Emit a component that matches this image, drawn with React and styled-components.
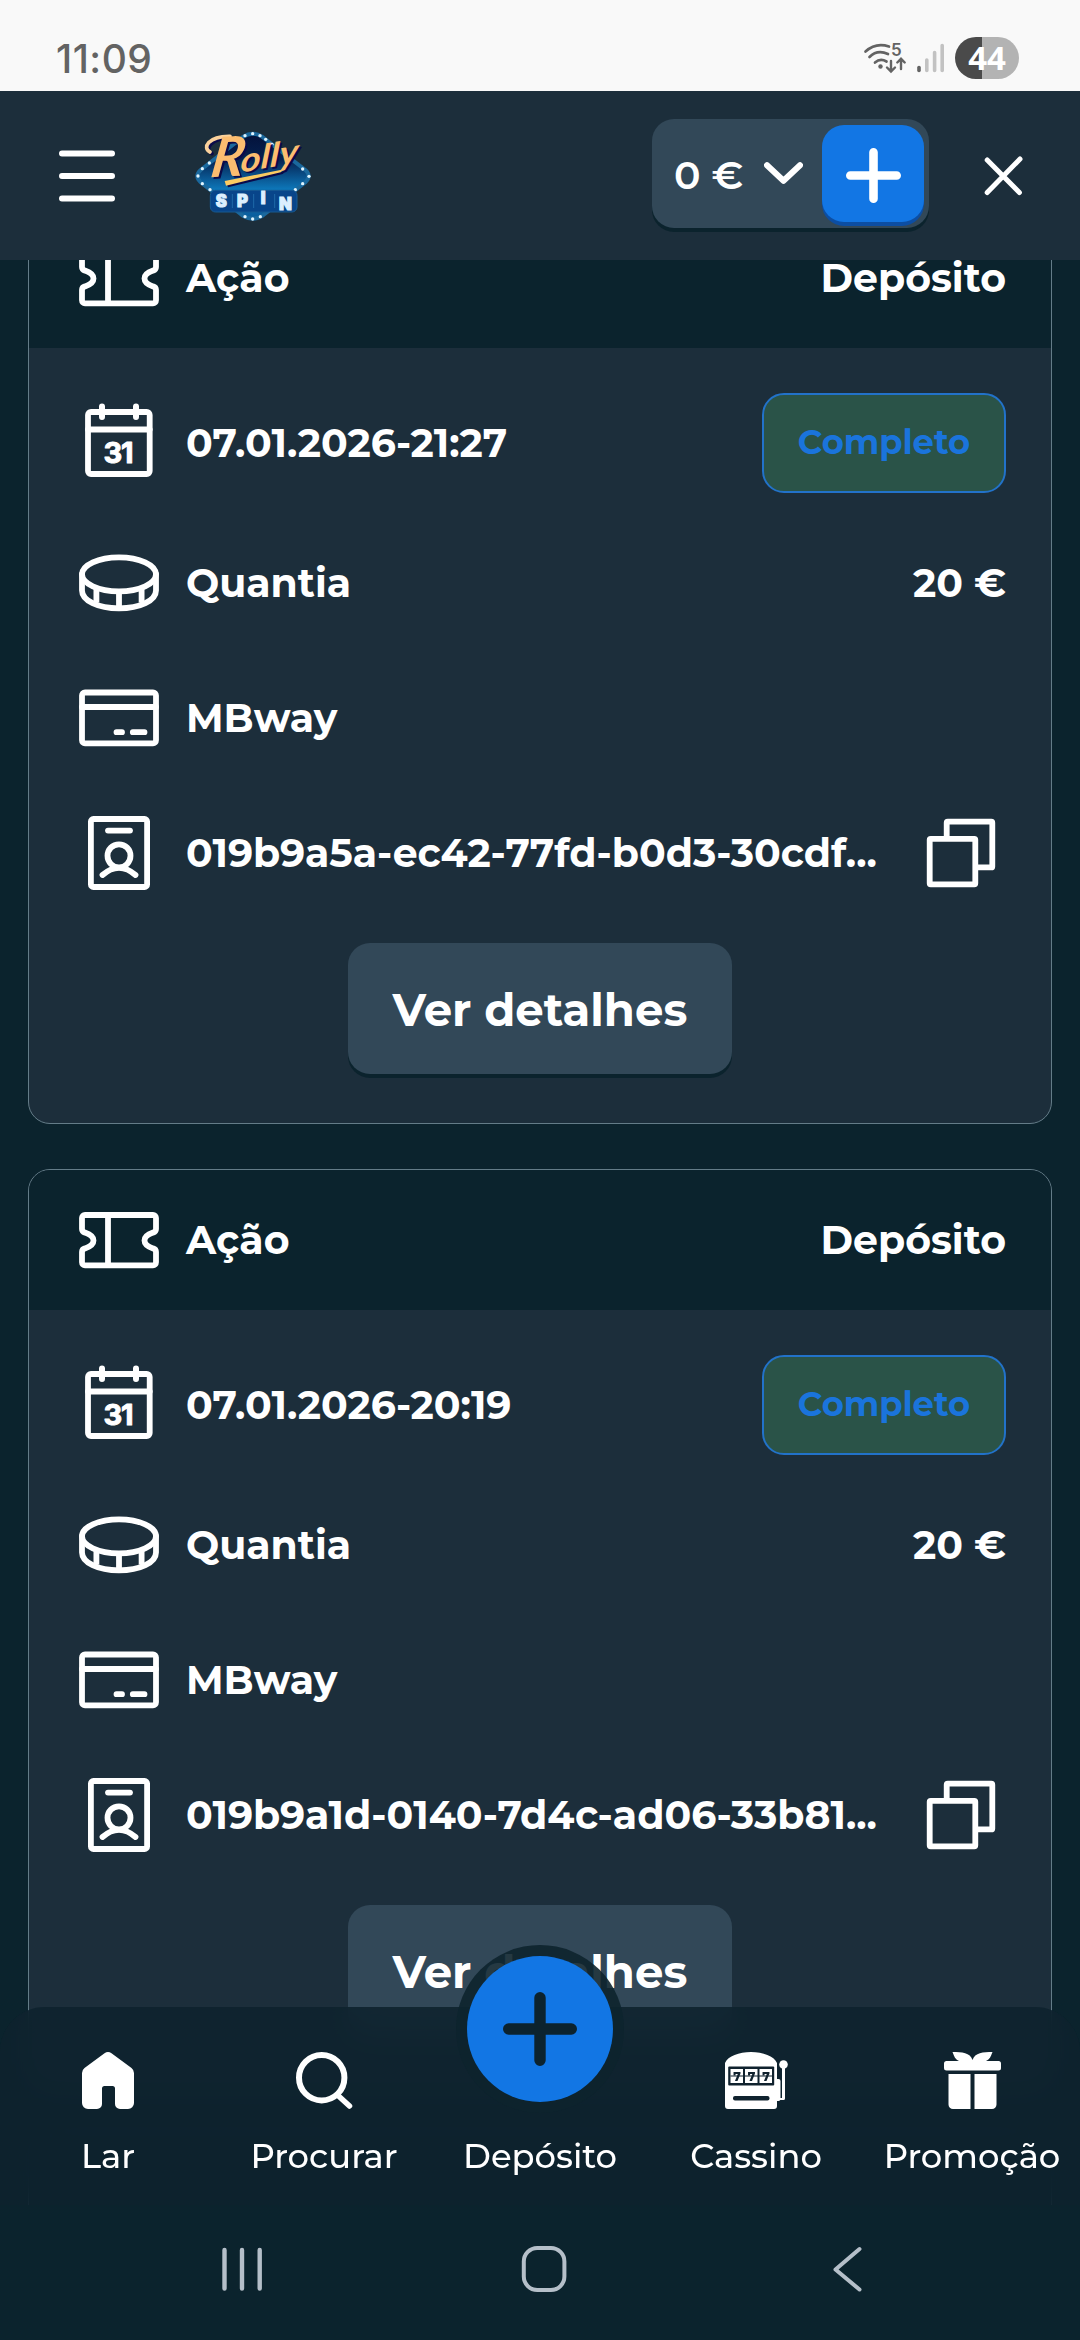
import styled, { createGlobalStyle, css } from "styled-components";

const GlobalStyle = createGlobalStyle`
    * {
        box-sizing: border-box;
    }

    body {
        margin: 0;
        background: #0b232d;
        color: #fff;
        font-family: Montserrat, Inter, sans-serif;
    }
`;

const transactions = [
    {
        id: "019b9a5a-ec42-77fd-b0d3-30cdf...",
        date: "07.01.2026-21:27",
        amount: "20 €",
        method: "MBway",
        status: "Completo",
    },
    {
        id: "019b9a1d-0140-7d4c-ad06-33b81...",
        date: "07.01.2026-20:19",
        amount: "20 €",
        method: "MBway",
        status: "Completo",
    },
];

/* ---------- icons ---------- */

const TicketIcon = () => (
    <LineIcon viewBox="0 0 90 90">
        <path d="M11 20H79a3 3 0 0 1 3 3V34c0 2-1 3-3 3.6c-4.500 1.500-8.500 4-8.500 7.900s4 6.400 8.500 7.900c2 .6 3 1.600 3 3.600V67.300a3 3 0 0 1-3 3H11a3 3 0 0 1-3-3V57c0-2 1-3 3-3.600c4.500-1.500 8.500-4 8.500-7.900s-4-6.400-8.500-7.900c-2-.6-3-1.600-3-3.600V23a3 3 0 0 1 3-3Z" />
        <path d="M34 20V70" />
    </LineIcon>
);

const CalendarIcon = () => (
    <LineIcon viewBox="0 0 90 90">
        <rect x="14" y="14" width="61.700" height="62" rx="3" />
        <path d="M14 31.500H75.700" />
        <path d="M28 8.500V19M62 8.500V19" strokeWidth="6" />
        <CalendarDay x="29.500" y="65">3</CalendarDay>
        <CalendarDay x="47" y="65">1</CalendarDay>
    </LineIcon>
);

const CoinIcon = () => (
    <LineIcon viewBox="0 0 90 90">
        <ellipse cx="45" cy="36.300" rx="37" ry="17" />
        <path d="M8 36V52.500C8 62.500 24 70.400 45 70.400S82 62.500 82 52.500V36" />
        <path d="M22.400 51V64.500M45 54V70M67.600 51V64.500" strokeLinecap="butt" />
    </LineIcon>
);

const CardIcon = () => (
    <LineIcon viewBox="0 0 90 90">
        <rect x="8" y="19.500" width="74" height="50.800" rx="3" />
        <path d="M8 34H82" />
        <path d="M42.500 59.200H48M58.800 59.200H70.500" />
    </LineIcon>
);

const IdIcon = () => (
    <LineIcon viewBox="0 0 90 90">
        <rect x="16.900" y="11" width="56.200" height="68" rx="2.500" />
        <path d="M34 22.600H56" />
        <circle cx="45" cy="47.800" r="11.500" />
        <path d="M28.500 67C33 63 38.500 59.800 45 59.800S57 63 61.500 67" />
    </LineIcon>
);

const CopyIcon = () => (
    <LineIcon viewBox="0 0 90 90">
        <path d="M30.700 29V14.700a1 1 0 0 1 1-1H75.300a1 1 0 0 1 1 1V58.400a1 1 0 0 1-1 1H60" />
        <rect x="13.700" y="30.800" width="45.600" height="45.500" rx="1" />
    </LineIcon>
);

const MenuIcon = () => (
    <svg width="56" height="52" viewBox="0 0 56 52" fill="none" stroke="#fff" strokeWidth="6" strokeLinecap="round">
        <path d="M3 3.500H53M3 26H53M3 48.500H53" />
    </svg>
);

const CloseIcon = () => (
    <svg width="39" height="40" viewBox="0 0 39 40" fill="none" stroke="#fff" strokeWidth="5" strokeLinecap="round">
        <path d="M3.200 4L35.400 36.500M36 3L3.200 36.500" />
    </svg>
);

const ChevronIcon = () => (
    <svg width="39" height="23" viewBox="0 0 39 23" fill="none" stroke="#fff" strokeWidth="6" strokeLinecap="round" strokeLinejoin="round">
        <path d="M3 3.200L19.500 18.800L36 3.200" />
    </svg>
);

const PlusIcon = ({ size, weight, color }) => (
    <svg width={size} height={size} viewBox={`0 0 ${size} ${size}`} stroke={color} strokeWidth={weight} strokeLinecap="round">
        <path d={`M${size / 2} ${weight / 2}V${size - weight / 2}M${weight / 2} ${size / 2}H${size - weight / 2}`} />
    </svg>
);

const bulbs = [
    [218, 41], [195, 47], [240, 47], [257, 58], [276, 73], [88, 129], [67, 146], [54, 168], [67, 191], [90, 209],
    [368, 147], [387, 169], [368, 191], [346, 209], [195, 290], [218, 297], [241, 290],
];

const RollyText = () => (
    <>
        <ScriptBig transform="translate(88 172) rotate(-3) skewX(-12)">R</ScriptBig>
        <ScriptSmall
            transform="translate(180 158) rotate(-10) skewX(-14)"
            textLength="176"
            lengthAdjust="spacingAndGlyphs"
        >
            olly
        </ScriptSmall>
    </>
);

const Logo = () => (
    <svg width="120" height="96" viewBox="36 24 360 288" overflow="visible">
        <defs>
            <linearGradient id="sign" x1="0" y1="0" x2="0" y2="1">
                <stop offset="0" stopColor="#04123a" />
                <stop offset=".3" stopColor="#05204f" />
                <stop offset=".65" stopColor="#0d76b8" />
                <stop offset="1" stopColor="#0a5c9c" />
            </linearGradient>
        </defs>
        <path
            d="M190 50Q218 32 246 50L376 150Q396 168 376 187L246 288Q218 304 190 288L62 187Q42 168 62 150Z"
            fill="url(#sign)"
            stroke="#1a689d"
            strokeWidth="12"
        />
        {bulbs.map(([cx, cy]) => (
            <circle key={`${cx}-${cy}`} cx={cx} cy={cy} r="5" fill="#dff4ff" />
        ))}
        <rect x="91" y="211" width="260" height="65" rx="15" fill="#08458a" stroke="#175a92" strokeWidth="3" />
        <path d="M157 222V264M221 222V264M284 222V264" stroke="#2370ad" strokeWidth="2.500" />
        <SpinLetter x="107" y="262">S</SpinLetter>
        <SpinLetter x="171" y="262">P</SpinLetter>
        <SpinLetter x="242" y="253">I</SpinLetter>
        <SpinLetter x="297" y="270">N</SpinLetter>

        {/* dark offset copy under the gold lettering */}
        <g transform="translate(6 5)" fill="#0a0a4a">
            <path d="M90 96C66 84 84 48 150 49" fill="none" stroke="#0a0a4a" strokeWidth="11" strokeLinecap="round" />
            <path d="M134 183L312 148L302 157L138 197Z" />
            <RollyText />
        </g>
        <g fill="#fbbd70">
            <path d="M90 96C66 84 84 48 150 49" fill="none" stroke="#fbd29c" strokeWidth="11" strokeLinecap="round" />
            <path d="M134 183L312 148L302 157L138 197Z" fill="#fbcb62" />
            <RollyText />
        </g>
    </svg>
);

const WifiIcon = () => (
    <svg width="43" height="32" viewBox="0 0 43 32" overflow="visible" fill="none" stroke="#636363" strokeWidth="2.700" strokeLinecap="round">
        <path d="M1.500 9.500C8 3.500 16 1.500 25 4.500M5.500 15C10.500 10 17 9 24 12M11 20.500C14.500 17.500 19 17.500 22.500 19.500" />
        <circle cx="16.500" cy="24.500" r="2.200" fill="#636363" stroke="none" />
        <path d="M27 19V29M23 25.500L27 29.500L31 25.500M37 27V17M33.300 20.500L37 16.800L40.700 20.500" strokeWidth="2.400" />
        <WifiBand x="27" y="14">5</WifiBand>
    </svg>
);

const SignalIcon = () => (
    <svg width="28" height="30" viewBox="0 0 28 30" strokeWidth="3.600" strokeLinecap="round">
        <path d="M2 24.500V27.500" stroke="#636363" />
        <path d="M9.800 17V27.500M17.600 9.500V27.500M25.200 2.500V27.500" stroke="#c2c2c2" />
    </svg>
);

const HomeIcon = () => (
    <svg width="52" height="57" viewBox="0 0 52 57" fill="#fff">
        <path d="M22.500 1.300a6 6 0 0 1 7 0L49.500 16Q52 18 52 21V51a6 6 0 0 1-6 6H38a5 5 0 0 1-5-5V36.500a2.500 2.500 0 0 0-2.500-2.500h-8a2.500 2.500 0 0 0-2.500 2.500V52a5 5 0 0 1-5 5H6a6 6 0 0 1-6-6V21Q0 18 2.500 16Z" />
    </svg>
);

const SearchIcon = () => (
    <svg width="57" height="57" viewBox="0 0 57 57" fill="none" stroke="#fff" strokeWidth="6" strokeLinecap="round">
        <circle cx="25.700" cy="25.700" r="22.700" />
        <path d="M42 43.500L53.500 54" strokeWidth="5.500" />
    </svg>
);

const SlotIcon = () => (
    <svg width="63" height="57" viewBox="0 0 63 57" overflow="visible" fill="#fff">
        <path d="M0 11C3 4 14 0 26 0S49 4 52 11V27h1.500q2 0 2 2V47q0 2-2 2H52V54a3 3 0 0 1-3 3H3a3 3 0 0 1-3-3Z" />
        <circle cx="58.500" cy="12.500" r="4.300" />
        <path d="M57 16H60V46.500a1.500 1.500 0 0 1-3 0ZM55 46H58V48H55Z" />
        <rect x="3.200" y="14.500" width="46" height="19" rx="1" fill="#10222e" />
        <path d="M5.500 17H18V31H5.500ZM20 17H32.500V31H20ZM34.500 17H47V31H34.500Z" />
        <SlotDigit x="8.300" y="29">7</SlotDigit>
        <SlotDigit x="22.800" y="29">7</SlotDigit>
        <SlotDigit x="37.300" y="29">7</SlotDigit>
        <path d="M5.500 24H47" stroke="#10222e" strokeWidth="1" />
        <rect x="8" y="44" width="36.500" height="4.600" rx="2" fill="#10222e" />
    </svg>
);

const GiftIcon = () => (
    <svg width="57" height="57" viewBox="0 0 57 57" fill="#fff">
        <path d="M8.500 0C18 0 26 .5 28.500 8C31 .5 39 0 48.500 0C46.500 5 46 7 42 9H15C11 7 10.500 5 8.500 0Z" />
        <rect x="0" y="9" width="57" height="9.500" rx="2.500" />
        <path d="M4.500 22H26.500V57H9a4.500 4.500 0 0 1-4.500-4.500ZM30.500 22H52.500V52.500A4.500 4.500 0 0 1 48 57H30.500Z" />
    </svg>
);

const RecentsIcon = () => (
    <NavGlyph width="44" height="48" viewBox="0 0 44 48">
        <path d="M4.500 5V43.500M22 5V43.500M39.700 5V43.500" strokeWidth="4.400" />
    </NavGlyph>
);

const HomeKeyIcon = () => (
    <NavGlyph $nudge width="48" height="48" viewBox="0 0 48 48">
        <rect x="3.800" y="3" width="40.600" height="42" rx="13.500" />
    </NavGlyph>
);

const BackIcon = () => (
    <NavGlyph width="32" height="48" viewBox="0 0 32 48">
        <path d="M28.500 4L4.500 24.500L28.500 44.500" />
    </NavGlyph>
);

/* ---------- components ---------- */

const Transaction = ({ item }) => (
    <Card>
        <CardHeader>
            <Row>
                <TicketIcon />
                <Label>Ação</Label>
                <Value>Depósito</Value>
            </Row>
        </CardHeader>
        <CardBody>
            <Row $tall>
                <CalendarIcon />
                <Label>{item.date}</Label>
                <Badge>{item.status}</Badge>
            </Row>
            <Row>
                <CoinIcon />
                <Label>Quantia</Label>
                <Value>{item.amount}</Value>
            </Row>
            <Row>
                <CardIcon />
                <Label>{item.method}</Label>
            </Row>
            <Row>
                <IdIcon />
                <Label>{item.id}</Label>
                <CopyIcon />
            </Row>
            <DetailsButton>Ver detalhes</DetailsButton>
        </CardBody>
    </Card>
);

const App = () => {
    return (
        <>
            <GlobalStyle />
            <Screen>
                <StatusBar>
                    <Clock>11:09</Clock>
                    <StatusIcons>
                        <WifiIcon />
                        <SignalIcon />
                        <Battery>44</Battery>
                    </StatusIcons>
                </StatusBar>

                <Header>
                    <MenuIcon />
                    <LogoLink>
                        <Logo />
                    </LogoLink>
                    <Balance>
                        <Amount>0 €</Amount>
                        <ChevronIcon />
                        <AddButton>
                            <PlusIcon size={55} weight={8.6} color="#fff" />
                        </AddButton>
                    </Balance>
                    <CloseIcon />
                </Header>

                <Content>
                    <List>
                        {transactions.map((item) => (
                            <Transaction key={item.id} item={item} />
                        ))}
                        {/* next card, only its blurred top shows behind the bar */}
                        <Card>
                            <CardHeader />
                        </Card>
                    </List>
                </Content>

                <Footer>
                    <TabBar>
                        <Tab>
                            <HomeIcon />
                            <TabLabel>Lar</TabLabel>
                        </Tab>
                        <Tab>
                            <SearchIcon />
                            <TabLabel>Procurar</TabLabel>
                        </Tab>
                        <Tab>
                            <DepositButton>
                                <PlusIcon size={74} weight={11.4} color="#0c232e" />
                            </DepositButton>
                            <TabLabel>Depósito</TabLabel>
                        </Tab>
                        <Tab>
                            <SlotIcon />
                            <TabLabel>Cassino</TabLabel>
                        </Tab>
                        <Tab>
                            <GiftIcon />
                            <TabLabel>Promoção</TabLabel>
                        </Tab>
                    </TabBar>
                    <SystemNav>
                        <RecentsIcon />
                        <HomeKeyIcon />
                        <BackIcon />
                    </SystemNav>
                </Footer>
            </Screen>
        </>
    );
};

/* ---------- styles ---------- */

const Screen = styled.div`
    position: relative;
    display: flex;
    flex-direction: column;
    width: 1080px;
    height: 2340px;
    overflow: hidden;
    background: #0b232d;
`;

const StatusBar = styled.div`
    display: flex;
    flex: none;
    justify-content: space-between;
    align-items: center;
    height: 91px;
    padding: 25px 61px 0 56px;
    background: #f9f9f9;
    color: #636363;
`;

const Clock = styled.span`
    font-family: Inter, sans-serif;
    font-size: 39px;
    font-weight: 500;
    letter-spacing: 0.5px;
`;

const StatusIcons = styled.div`
    display: flex;
    align-items: center;
    gap: 10px;
`;

const Battery = styled.span`
    width: 64px;
    height: 42px;
    border-radius: 21px;
    background: linear-gradient(90deg, #4a4a4a 42%, #b3b3b3 42%);
    color: #fff;
    font-family: "Open Sans", sans-serif;
    font-size: 33px;
    font-weight: 700;
    line-height: 42px;
    text-align: center;
`;

const WifiBand = styled.text`
    fill: #636363;
    stroke: none;
    font-family: Inter, sans-serif;
    font-size: 17px;
    font-weight: 600;
`;

const Header = styled.header`
    display: flex;
    flex: none;
    align-items: center;
    height: 169px;
    padding: 0 57px 0 59px;
    background: #1c2e3b;
    z-index: 1;
`;

const LogoLink = styled.a`
    display: flex;
    margin-left: 77px;
`;

const Balance = styled.div`
    display: flex;
    align-items: center;
    width: 277px;
    height: 109px;
    margin: -4px 55px 0 auto;
    padding: 0 5px 0 22px;
    border-radius: 22px;
    background: #324858;
    box-shadow: 0 4px 0 #0b232d;
`;

const Amount = styled.span`
    width: 90px;
    padding-top: 2px;
    font-size: 39.4px;
    font-weight: 600;
    white-space: nowrap;
`;

const AddButton = styled.button`
    display: flex;
    justify-content: center;
    align-items: center;
    width: 102px;
    height: 97px;
    margin: 0 0 0 auto;
    padding: 4px 0 0;
    border: none;
    border-radius: 22px;
    background: #1276e4;
    box-shadow: 0 4px 0 #0c4ea3;
`;

const Content = styled.main`
    flex: 1;
    min-height: 0;
    overflow: hidden;
`;

/* list is scrolled up so the first card starts under the header */
const List = styled.div`
    display: flex;
    flex-direction: column;
    gap: 45px;
    margin-top: -53px;
    padding: 0 28px;
`;

const Card = styled.section`
    flex: none;
    overflow: hidden;
    border: 1px solid #647c88;
    border-radius: 22px;
    background: #1c2e3b;
`;

const CardHeader = styled.div`
    min-height: 140px;
    padding: 25px 45px;
    background: #0b232d;
`;

const CardBody = styled.div`
    display: flex;
    flex-direction: column;
    gap: 45px;
    padding: 45px 45px 49px;
`;

const Row = styled.div`
    display: flex;
    align-items: center;
    height: ${({ $tall }) => ($tall ? 100 : 90)}px;
`;

const LineIcon = styled.svg`
    flex: none;
    width: 90px;
    height: 90px;
    fill: none;
    stroke: #fff;
    stroke-width: 5.8;
    stroke-linecap: round;
    stroke-linejoin: round;
`;

const CalendarDay = styled.text`
    fill: #fff;
    stroke: #fff;
    stroke-width: 1;
    font-family: Inter, sans-serif;
    font-size: 29px;
    font-weight: 700;
`;

const text = css`
    font-size: 39.4px;
    font-weight: 700;
    white-space: nowrap;
`;

const Label = styled.span`
    ${text}
    flex: 1;
    padding-left: 22px;
`;

const Value = styled.span`
    ${text}
`;

const Badge = styled.span`
    display: flex;
    align-items: center;
    justify-content: center;
    width: 244px;
    height: 100px;
    padding-bottom: 3px;
    border: 2px solid #2272c9;
    border-radius: 22px;
    background: #2a5348;
    color: #1a74dc;
    font-size: 33.75px;
    font-weight: 700;
`;

const DetailsButton = styled.button`
    align-self: center;
    width: 384px;
    height: 131px;
    padding: 2px 0 0;
    border: none;
    border-radius: 22px;
    background: #324858;
    box-shadow: 0 4px 0 #0b232d;
    color: #fff;
    font-family: inherit;
    font-size: 45px;
    font-weight: 700;
`;

const Footer = styled.footer`
    position: absolute;
    right: 0;
    bottom: 0;
    left: 0;
`;

const TabBar = styled.nav`
    display: grid;
    grid-template-columns: repeat(5, 1fr);
    height: 198px;
    padding-top: 45px;
    border-radius: 45px 45px 0 0;
    background: rgba(14, 34, 46, 0.88);
    backdrop-filter: blur(14px);
`;

const Tab = styled.div`
    position: relative;
    display: flex;
    flex-direction: column;
    align-items: center;
    justify-content: space-between;
    height: 124px;
`;

const TabLabel = styled.span`
    margin-top: auto;
    font-size: 33.75px;
    font-weight: 500;
    line-height: 40px;
    white-space: nowrap;
`;

const DepositButton = styled.button`
    position: absolute;
    top: -96px;
    left: 50%;
    display: flex;
    justify-content: center;
    align-items: center;
    width: 146px;
    height: 146px;
    padding: 0;
    transform: translateX(-50%);
    border: none;
    border-radius: 50%;
    background: #1276e4;
    box-shadow: 0 0 0 11px rgba(13, 35, 46, 0.9);
`;

const SystemNav = styled.div`
    display: flex;
    justify-content: space-between;
    align-items: center;
    height: 135px;
    padding: 0 217px 7px 220px;
    background: #0b232d;
`;

const NavGlyph = styled.svg`
    margin-right: ${({ $nudge }) => ($nudge ? 7 : 0)}px;
    fill: none;
    stroke: #b5bfc9;
    stroke-width: 4;
    stroke-linecap: round;
    stroke-linejoin: round;
`;

const SpinLetter = styled.text`
    fill: #dcefff;
    stroke: #dcefff;
    stroke-width: 3;
    font-family: Inter, sans-serif;
    font-size: 50px;
    font-weight: 900;
`;

const ScriptBig = styled.text`
    font-family: Lato, sans-serif;
    font-size: 165px;
    font-style: italic;
    font-weight: 700;
`;

const ScriptSmall = styled.text`
    font-family: Lato, sans-serif;
    font-size: 98px;
    font-style: italic;
    font-weight: 700;
`;

const SlotDigit = styled.text`
    fill: #10222e;
    font-size: 12px;
    font-weight: 800;
`;

export default App;
